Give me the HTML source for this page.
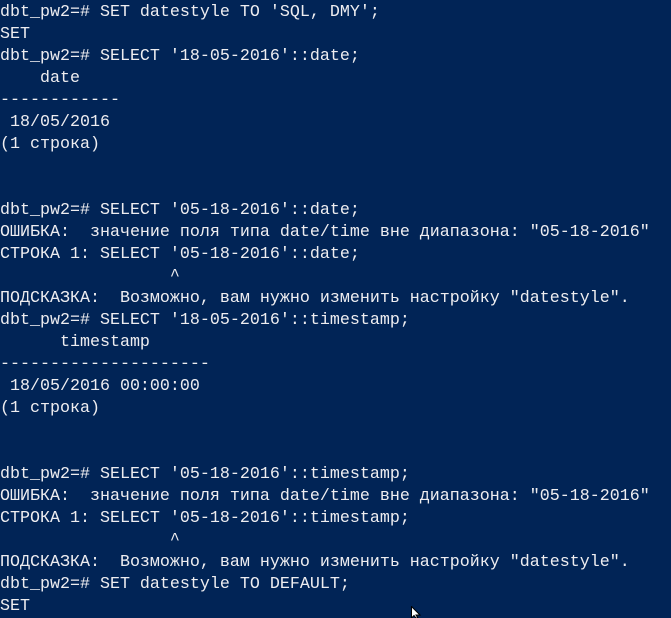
<!DOCTYPE html>
<html><head><meta charset="utf-8"><style>
html,body{margin:0;padding:0;background:#012456;width:671px;height:617px;overflow:hidden}
pre{margin:0;padding:2px 0 0 0;font-family:"Liberation Mono","DejaVu Sans Mono",monospace;font-size:16.67px;line-height:22px;color:#eeedf0;white-space:pre}
svg{position:absolute;left:411px;top:606px}
</style></head><body>
<pre>dbt_pw2=# SET datestyle TO 'SQL, DMY';
SET
dbt_pw2=# SELECT '18-05-2016'::date;
    date
------------
 18/05/2016
(1 строка)


dbt_pw2=# SELECT '05-18-2016'::date;
ОШИБКА:  значение поля типа date/time вне диапазона: "05-18-2016"
СТРОКА 1: SELECT '05-18-2016'::date;
                 ^
ПОДСКАЗКА:  Возможно, вам нужно изменить настройку "datestyle".
dbt_pw2=# SELECT '18-05-2016'::timestamp;
      timestamp
---------------------
 18/05/2016 00:00:00
(1 строка)


dbt_pw2=# SELECT '05-18-2016'::timestamp;
ОШИБКА:  значение поля типа date/time вне диапазона: "05-18-2016"
СТРОКА 1: SELECT '05-18-2016'::timestamp;
                 ^
ПОДСКАЗКА:  Возможно, вам нужно изменить настройку "datestyle".
dbt_pw2=# SET datestyle TO DEFAULT;
SET</pre>
<svg width="12" height="12" viewBox="0 0 12 12"><path d="M0.5 0.5 L0.5 12 L3 9.5 L5 12 L7 12 L5 9 L9 9 Z" fill="#fff" stroke="#000" stroke-width="1"/></svg>
</body></html>
